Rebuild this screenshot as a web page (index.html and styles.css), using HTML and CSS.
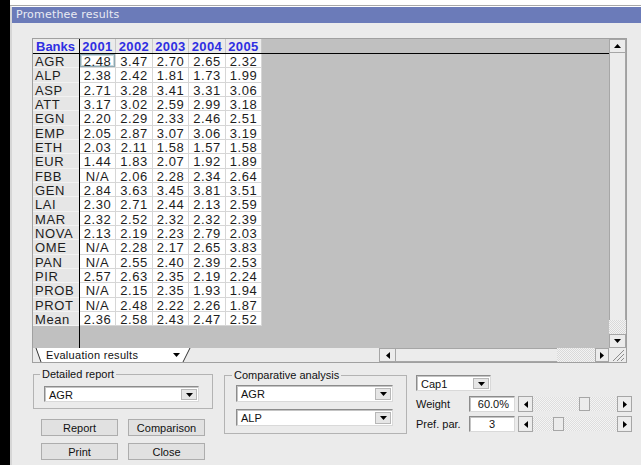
FILE: index.html
```html
<!DOCTYPE html>
<html lang="en">
<head>
<meta charset="utf-8">
<title>Promethee results</title>
<link rel="stylesheet" href="styles.css">
</head>
<body>
<div class="desk"></div>
<div class="app">
  <div class="backdrop"></div>
  <div class="window">
    <div class="titlebar">Promethee results</div>
    <div class="client">
      <div class="sheet">
        <div class="sheet-main">
          <div class="grid">
            <div class="grid-head">
              <div class="hc hc-name">Banks</div>
              <div class="hc w36">2001</div>
              <div class="hc w37">2002</div>
              <div class="hc w36">2003</div>
              <div class="hc w37">2004</div>
              <div class="hc w36">2005</div>
            </div>
            <div class="grid-body">
              <div class="names">
                <div class="nc">AGR</div>
                <div class="nc">ALP</div>
                <div class="nc">ASP</div>
                <div class="nc">ATT</div>
                <div class="nc">EGN</div>
                <div class="nc">EMP</div>
                <div class="nc">ETH</div>
                <div class="nc">EUR</div>
                <div class="nc">FBB</div>
                <div class="nc">GEN</div>
                <div class="nc">LAI</div>
                <div class="nc">MAR</div>
                <div class="nc">NOVA</div>
                <div class="nc">OME</div>
                <div class="nc">PAN</div>
                <div class="nc">PIR</div>
                <div class="nc">PROB</div>
                <div class="nc">PROT</div>
                <div class="nc">Mean</div>
              </div>
              <div class="values">
                <div class="vc focus">2.48</div><div class="vc">3.47</div><div class="vc">2.70</div><div class="vc">2.65</div><div class="vc">2.32</div>
                <div class="vc">2.38</div><div class="vc">2.42</div><div class="vc">1.81</div><div class="vc">1.73</div><div class="vc">1.99</div>
                <div class="vc">2.71</div><div class="vc">3.28</div><div class="vc">3.41</div><div class="vc">3.31</div><div class="vc">3.06</div>
                <div class="vc">3.17</div><div class="vc">3.02</div><div class="vc">2.59</div><div class="vc">2.99</div><div class="vc">3.18</div>
                <div class="vc">2.20</div><div class="vc">2.29</div><div class="vc">2.33</div><div class="vc">2.46</div><div class="vc">2.51</div>
                <div class="vc">2.05</div><div class="vc">2.87</div><div class="vc">3.07</div><div class="vc">3.06</div><div class="vc">3.19</div>
                <div class="vc">2.03</div><div class="vc">2.11</div><div class="vc">1.58</div><div class="vc">1.57</div><div class="vc">1.58</div>
                <div class="vc">1.44</div><div class="vc">1.83</div><div class="vc">2.07</div><div class="vc">1.92</div><div class="vc">1.89</div>
                <div class="vc">N/A</div><div class="vc">2.06</div><div class="vc">2.28</div><div class="vc">2.34</div><div class="vc">2.64</div>
                <div class="vc">2.84</div><div class="vc">3.63</div><div class="vc">3.45</div><div class="vc">3.81</div><div class="vc">3.51</div>
                <div class="vc">2.30</div><div class="vc">2.71</div><div class="vc">2.44</div><div class="vc">2.13</div><div class="vc">2.59</div>
                <div class="vc">2.32</div><div class="vc">2.52</div><div class="vc">2.32</div><div class="vc">2.32</div><div class="vc">2.39</div>
                <div class="vc">2.13</div><div class="vc">2.19</div><div class="vc">2.23</div><div class="vc">2.79</div><div class="vc">2.03</div>
                <div class="vc">N/A</div><div class="vc">2.28</div><div class="vc">2.17</div><div class="vc">2.65</div><div class="vc">3.83</div>
                <div class="vc">N/A</div><div class="vc">2.55</div><div class="vc">2.40</div><div class="vc">2.39</div><div class="vc">2.53</div>
                <div class="vc">2.57</div><div class="vc">2.63</div><div class="vc">2.35</div><div class="vc">2.19</div><div class="vc">2.24</div>
                <div class="vc">N/A</div><div class="vc">2.15</div><div class="vc">2.35</div><div class="vc">1.93</div><div class="vc">1.94</div>
                <div class="vc">N/A</div><div class="vc">2.48</div><div class="vc">2.22</div><div class="vc">2.26</div><div class="vc">1.87</div>
                <div class="vc">2.36</div><div class="vc">2.58</div><div class="vc">2.43</div><div class="vc">2.47</div><div class="vc">2.52</div>
              </div>
            </div>
          </div>
          <div class="vscroll">
            <div class="sb-btn v-btn"><svg width="7" height="4" viewBox="0 0 7 4"><path d="M0 4H7L3.5 0Z"/></svg></div>
            <div class="v-thumb"></div>
            <div class="v-track"></div>
            <div class="sb-btn v-btn"><svg width="7" height="4" viewBox="0 0 7 4"><path d="M0 0H7L3.5 4Z"/></svg></div>
          </div>
        </div>
        <div class="sheet-foot">
          <div class="tabs">
            <div class="tab">
              <svg class="tab-edge" width="9" height="14" viewBox="0 0 9 14"><path d="M1 0H9V14H6Z" fill="#fff"/><path d="M1 0L6 14" stroke="#333" stroke-width="1" fill="none"/></svg>
              <div class="tab-face">
                <span>Evaluation results</span>
                <svg width="7" height="4" viewBox="0 0 7 4"><path d="M0 0H7L3.5 4Z"/></svg>
              </div>
              <svg class="tab-edge" width="9" height="14" viewBox="0 0 9 14"><path d="M0 0H8L1 14H0Z" fill="#fff"/><path d="M8 0L1 14" stroke="#333" stroke-width="1" fill="none"/></svg>
            </div>
          </div>
          <div class="hscroll">
            <div class="sb-btn h-btn"><svg width="4" height="7" viewBox="0 0 4 7"><path d="M4 0V7L0 3.5Z"/></svg></div>
            <div class="h-thumb"></div>
            <div class="h-track"></div>
            <div class="sb-btn h-btn h-btn-r"><svg width="4" height="7" viewBox="0 0 4 7"><path d="M0 0V7L4 3.5Z"/></svg></div>
          </div>
          <div class="grip"><svg width="17" height="14" viewBox="0 0 17 14"><path d="M4 13L15 2M8 13L15 6M12 13L15 10" stroke="#8c8c8c" stroke-width="1" fill="none"/></svg></div>
        </div>
      </div>

      <div class="controls">
        <div class="col col-report">
          <fieldset class="group g-report">
            <legend>Detailed report</legend>
            <div class="combo combo-report">
              <span class="combo-text">AGR</span>
              <span class="combo-btn"><svg width="7" height="4" viewBox="0 0 7 4"><path d="M0 0H7L3.5 4Z"/></svg></span>
            </div>
          </fieldset>
          <div class="buttons">
            <button class="btn">Report</button>
            <button class="btn">Comparison</button>
            <button class="btn">Print</button>
            <button class="btn">Close</button>
          </div>
        </div>

        <div class="col col-compare">
          <fieldset class="group g-compare">
            <legend>Comparative analysis</legend>
            <div class="combo combo-compare">
              <span class="combo-text">AGR</span>
              <span class="combo-btn"><svg width="7" height="4" viewBox="0 0 7 4"><path d="M0 0H7L3.5 4Z"/></svg></span>
            </div>
            <div class="combo combo-compare">
              <span class="combo-text">ALP</span>
              <span class="combo-btn"><svg width="7" height="4" viewBox="0 0 7 4"><path d="M0 0H7L3.5 4Z"/></svg></span>
            </div>
          </fieldset>
        </div>

        <div class="col col-crit">
          <div class="combo combo-crit">
            <span class="combo-text">Cap1</span>
            <span class="combo-btn"><svg width="7" height="4" viewBox="0 0 7 4"><path d="M0 0H7L3.5 4Z"/></svg></span>
          </div>
          <div class="param-row">
            <span class="param-label">Weight</span>
            <span class="field field-right">60.0%</span>
            <div class="mini-scroll">
              <div class="sb-btn m-btn"><svg width="4" height="7" viewBox="0 0 4 7"><path d="M4 0V7L0 3.5Z"/></svg></div>
              <div class="m-track"><div class="m-thumb" style="margin-left:46px"></div></div>
              <div class="sb-btn m-btn"><svg width="4" height="7" viewBox="0 0 4 7"><path d="M0 0V7L4 3.5Z"/></svg></div>
            </div>
          </div>
          <div class="param-row">
            <span class="param-label">Pref. par.</span>
            <span class="field field-center">3</span>
            <div class="mini-scroll">
              <div class="sb-btn m-btn"><svg width="4" height="7" viewBox="0 0 4 7"><path d="M4 0V7L0 3.5Z"/></svg></div>
              <div class="m-track"><div class="m-thumb" style="margin-left:20px"></div></div>
              <div class="sb-btn m-btn"><svg width="4" height="7" viewBox="0 0 4 7"><path d="M0 0V7L4 3.5Z"/></svg></div>
            </div>
          </div>
        </div>
      </div>
    </div>
  </div>
</div>
</body>
</html>
```
FILE: styles.css
```css
* { box-sizing: border-box; }

html, body { margin: 0; padding: 0; }

body {
  width: 641px;
  height: 465px;
  overflow: hidden;
  display: flex;
  background: #fff;
  font-family: "Liberation Sans", Arial, sans-serif;
  font-size: 11px;
  color: #111;
}

/* dark strip of the desktop on the left */
.desk { width: 10px; flex: none; background: #000; }

.app { flex: 1; min-width: 0; display: flex; flex-direction: column; }

/* edge of the parent window above the dialog */
.backdrop {
  height: 6px;
  background: #fff;
  border-bottom: 1px solid #a8a8a8;
}

.window {
  flex: 1;
  background: #ebebeb;
  border-left: 2px solid #d6d6d6;
  border-top: 1px solid #fff;
}

.titlebar {
  height: 16px;
  background: #6b7bb9;
  color: #e9ebf3;
  font-family: "DejaVu Sans", sans-serif;
  font-size: 11px;
  line-height: 16px;
  letter-spacing: 0.2px;
  padding-left: 4px;
}

.client { padding: 15px 0 0 20px; }

/* ---------- results sheet ---------- */
.sheet {
  width: 595px;
  height: 325px;
  border: 1px solid #a0a0a0;
  display: flex;
  flex-direction: column;
}

.sheet-main { flex: 1; min-height: 0; display: flex; }

.grid {
  flex: 1;
  background: #c0c0c0;
  display: flex;
  flex-direction: column;
}

.grid-head {
  height: 15px;
  display: flex;
  border-bottom: 1px solid #000;
}

.hc {
  height: 14px;
  background: #ebebeb;
  border-right: 1px solid #c9c9c9;
  color: #2f2fe2;
  font-weight: bold;
  font-size: 13px;
  padding-top: 1px;
  line-height: 13px;
  letter-spacing: 0.4px;
  text-align: center;
}
.hc-name {
  width: 47px;
  border-right: 1px solid #000;
  text-align: left;
  padding-left: 3px;
  letter-spacing: 0;
}
.w36 { width: 36px; }
.w37 { width: 37px; }

.grid-body { flex: 1; display: flex; }

.names {
  width: 47px;
  border-right: 1px solid #000;
  display: flex;
  flex-direction: column;
}
.nc {
  height: 14.33px;
  flex: none;
  background: #e6e6e6;
  border-bottom: 1px solid #f2f2f2;
  padding-left: 2px;
  padding-top: 1px;
  font-size: 13px;
  line-height: 13px;
  letter-spacing: 0.6px;
  color: #1d1d1d;
}

.values {
  align-self: flex-start;
  display: grid;
  grid-template-columns: 36px 37px 36px 37px 36px;
  grid-auto-rows: 14.33px;
}
.vc {
  background: #fff;
  border-right: 1px solid #d6d6d6;
  border-bottom: 1px solid #d6d6d6;
  text-align: center;
  padding-top: 1px;
  font-size: 13px;
  line-height: 13px;
  letter-spacing: 0.6px;
  color: #1d1d1d;
}
.vc.focus { box-shadow: inset 0 0 0 1px #8ea9b3, inset 0 0 0 2px #c9d8dd; }

/* ---------- scroll bars ---------- */
.sb-btn {
  display: flex;
  align-items: center;
  justify-content: center;
  background: #ececec;
  border: 1px solid #a6a6a6;
}
.sb-btn svg { fill: #000; }

.vscroll { width: 17px; display: flex; flex-direction: column; }
.v-btn { height: 14px; }
.v-thumb {
  flex: 1;
  background: #ececec;
  border-left: 1px solid #a6a6a6;
  border-right: 1px solid #a6a6a6;
}
.v-track {
  height: 14px;
  background: repeating-conic-gradient(#d9d9d9 0 25%, #f3f3f3 0 50%) 0 0 / 2px 2px;
}

.sheet-foot { height: 14px; display: flex; background: #ebebeb; }

.tabs { width: 346px; padding-left: 2px; display: flex; }
.tab { display: flex; height: 14px; }
.tab-edge { display: block; flex: none; }
.tab-face {
  width: 138px;
  background: #fff;
  display: flex;
  align-items: center;
  padding-left: 2px;
}
.tab-face span {
  width: 127px;
  font-size: 11px;
  letter-spacing: 0.3px;
  line-height: 14px;
  color: #111;
}
.tab-face svg { fill: #000; }

.hscroll { width: 230px; display: flex; }
.h-btn { width: 17px; height: 14px; }
.h-btn-r { width: 14px; }
.h-thumb {
  width: 161px;
  background: #ececec;
  border-top: 1px solid #a6a6a6;
  border-bottom: 1px solid #a6a6a6;
}
.h-track {
  width: 38px;
  background: repeating-conic-gradient(#d9d9d9 0 25%, #f3f3f3 0 50%) 0 0 / 2px 2px;
}
.grip { width: 17px; height: 14px; background: #ececec; }
.grip svg { display: block; }

/* ---------- controls under the sheet ---------- */
.controls { display: flex; padding-left: 1px; }

.col { display: flex; flex-direction: column; }
.col-report { margin-top: 5px; }
.col-compare { margin-top: 6px; margin-left: 11px; }
.col-crit { margin-top: 12px; margin-left: 9px; }

.group {
  margin: 0;
  border: 1px solid #b3b3b3;
  min-width: 0;
}
.group legend {
  padding: 0 2px;
  margin-left: -4px;
  font-size: 11px;
  line-height: 12px;
  color: #111;
}
.g-report { width: 180px; padding: 0 13px 6px 10px; }
.g-compare { width: 183px; padding: 0 13px 7px 11px; }

.combo {
  height: 17px;
  display: flex;
  align-items: stretch;
  background: #fff;
  border: 1px solid;
  border-color: #8c8c8c #d9d9d9 #d9d9d9 #8c8c8c;
  box-shadow: inset 1px 1px 0 #c4c4c4;
  padding: 2px 1px 1px 2px;
}
.combo-text { flex: 1; font-size: 11px; line-height: 12px; padding-left: 2px; color: #111; }
.combo-btn {
  width: 16px;
  display: flex;
  align-items: center;
  justify-content: center;
  background: #e6e6e6;
  border: 1px solid #b7b7b7;
}
.combo-btn svg { fill: #000; }

.combo-report { width: 155px; height: 16px; margin-top: 6px; }
.combo-compare { width: 157px; margin-top: 7px; }
.combo-compare:first-of-type { margin-top: 4px; }
.combo-crit { width: 75px; height: 16px; }

.buttons {
  display: grid;
  grid-template-columns: 77px 77px;
  column-gap: 10px;
  row-gap: 7px;
  margin: 10px 0 0 8px;
}
.btn {
  height: 17px;
  padding: 0;
  background: #e1e1e1;
  border: 1px solid #adadad;
  font-family: "Liberation Sans", Arial, sans-serif;
  font-size: 11px;
  color: #111;
}

.param-row {
  display: flex;
  align-items: center;
  height: 16px;
  margin-top: 5px;
}
.param-row + .param-row { margin-top: 4px; }
.param-label { width: 53px; font-size: 11px; color: #111; }
.field {
  width: 46px;
  height: 16px;
  background: #fff;
  border: 1px solid;
  border-color: #8c8c8c #d9d9d9 #d9d9d9 #8c8c8c;
  box-shadow: inset 1px 1px 0 #c4c4c4;
  font-size: 11px;
  line-height: 14px;
  color: #111;
}
.field-right { text-align: right; padding-right: 5px; }
.field-center { text-align: center; }

.mini-scroll {
  width: 114px;
  height: 16px;
  margin-left: 3px;
  display: flex;
}
.m-btn { width: 15px; }
.m-track {
  flex: 1;
  display: flex;
  background: repeating-conic-gradient(#dedede 0 25%, #f4f4f4 0 50%) 0 0 / 2px 2px;
  border-top: 1px solid #ebebeb;
  border-bottom: 1px solid #ebebeb;
}
.m-thumb {
  width: 11px;
  background: #ececec;
  border: 1px solid #a6a6a6;
}
```
